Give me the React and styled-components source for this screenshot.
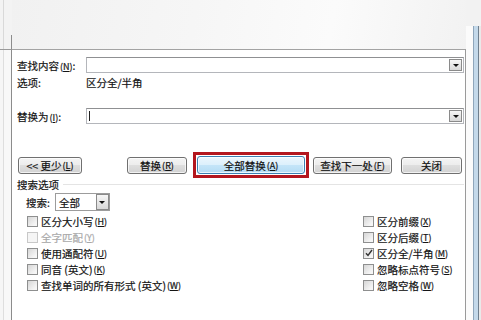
import React from 'react';
import styled, { createGlobalStyle } from 'styled-components';

const GlobalStyle = createGlobalStyle`
  html, body { margin: 0; padding: 0; background: #f3f3f3; }
  body { font-family: "Noto Sans CJK SC", "Liberation Sans", sans-serif; }
`;

const Frame = styled.div`
  width: 481px;
  height: 320px;
  overflow: hidden;
  display: grid;
  grid-template-columns: 12px 454px 15px;
  grid-template-rows: 49px 271px;
  background: #f2f2f2;
  color: #141414;
  font-size: 10.5px;
  -webkit-text-stroke: 0.2px currentColor;
`;

const TopLeft = styled.div`
  display: flex;
  flex-direction: column;
  justify-content: flex-end;
  background: linear-gradient(to right, #f3f3f3 3px, #d9d9d9 3px, #d9d9d9 4px, #f3f3f3 4px);
`;

const Stub = styled.div`
  height: 14px;
  border-right: 1px solid #8c8c8c;
`;

const Header = styled.div`
  background: linear-gradient(100deg, #f1f1f1 0%, #f6f6f6 40%, #fbfbfb 70%, #f2f2f2 100%);
`;

const RightFrame = styled.div`
  grid-row: 1 / span 2;
  grid-column: 3;
  display: flex;
  flex-direction: column;
`;

const FrameTop = styled.div`
  height: 26px;
  background: #f2f2f2;
`;

const FrameSide = styled.div`
  flex: 1;
  display: flex;
  background: #fbfbfb;
`;

const Stripe = styled.div`
  width: ${p => p.$w}px;
  background: ${p => p.$c};
`;

const Gutter = styled.div`
  border-top: 1px solid #9a9a9a;
  border-right: 1px solid #8c8c8c;
  background: linear-gradient(to right, #f6f6f6 3px, #dedede 3px, #dedede 4px, #f8f8f8 4px);
`;

const Panel = styled.div`
  border-top: 1px solid #a3a3a3;
  border-right: 1px solid #9a9a9a;
  background: #fff;
  padding: 7px 1px 0 5px;
  display: flex;
  flex-direction: column;
`;

const FieldRow = styled.div`
  display: grid;
  grid-template-columns: 69px 1fr;
  align-items: center;
  height: ${p => p.$h}px;
  margin-top: ${p => p.$mt || 0}px;
  white-space: nowrap;
`;

const Input = styled.div`
  height: 16px;
  box-sizing: border-box;
  border: 1px solid #b4b6bb;
  border-top-color: #8f9092;
  background: #fff;
  display: flex;
  align-items: center;
  justify-content: space-between;
  padding: 0 1px 0 2px;
`;

const Caret = styled.span`
  width: 1px;
  height: 10px;
  background: #222;
`;

const DropButton = styled.span`
  width: ${p => p.$w || 13}px;
  height: ${p => p.$h || 12}px;
  box-sizing: border-box;
  border: 1px solid #8a8a8a;
  background: linear-gradient(#f6f6f6, #d8d8d8);
  display: flex;
  align-items: center;
  justify-content: center;
  margin-left: auto;
`;

const Arrow = styled.span`
  width: 0;
  height: 0;
  border-left: 3px solid transparent;
  border-right: 3px solid transparent;
  border-top: 3px solid #111;
`;

const ButtonRow = styled.div`
  display: flex;
  align-items: center;
  height: 26px;
  margin-top: 28px;
`;

const Button = styled.div`
  width: ${p => p.$w}px;
  height: ${p => p.$h || 17}px;
  margin-left: ${p => p.$ml || 0}px;
  box-sizing: border-box;
  border: 1px solid ${p => (p.$primary ? '#3c7fb1' : '#707070')};
  border-radius: 3px;
  background: ${p =>
    p.$primary
      ? 'linear-gradient(#ecf6fd 0%, #dcf0fc 50%, #c5e5f8 50%, #b4dcf4 100%)'
      : 'linear-gradient(#f4f4f4 0%, #ececec 50%, #dedede 50%, #d2d2d2 100%)'};
  box-shadow: inset 0 0 0 1px rgba(255, 255, 255, 0.7);
  display: flex;
  align-items: center;
  justify-content: center;
  white-space: nowrap;
  color: #111;
`;

const Highlight = styled.div`
  margin-left: 6px;
  border: 3px solid #b3161e;
  padding: 1px;
  display: flex;
`;

const SectionHead = styled.div`
  display: flex;
  align-items: center;
  height: 12px;
`;

const Rule = styled.div`
  flex: 1;
  height: 1px;
  background: #e4e4e4;
  margin-left: 4px;
`;

const SearchRow = styled.div`
  display: flex;
  align-items: center;
  margin-top: 3px;
  padding-left: 9px;
  height: 18px;
`;

const Select = styled.div`
  margin-left: 5px;
  width: 55px;
  height: 18px;
  box-sizing: border-box;
  border: 1px solid #9c9c9c;
  display: flex;
  align-items: center;
  padding-left: 3px;
  background: #fff;
`;

const Options = styled.div`
  display: grid;
  grid-template-columns: 336px 1fr;
  margin-top: 2px;
  padding-left: 10px;
`;

const Column = styled.div`
  display: flex;
  flex-direction: column;
`;

const CheckItem = styled.div`
  display: flex;
  align-items: center;
  height: 16px;
  white-space: nowrap;
  color: ${p => (p.$disabled ? '#a9a9a9' : '#141414')};
`;

const Box = styled.span`
  width: 11px;
  height: 11px;
  box-sizing: border-box;
  margin-right: 3px;
  border: 1px solid ${p => (p.$disabled ? '#c8c8c8' : '#8e8f8f')};
  background: ${p =>
    p.$disabled ? '#f5f5f5' : 'linear-gradient(135deg, #d6d6d6, #f6f6f6 80%)'};
  display: flex;
  align-items: center;
  justify-content: center;
`;

const KeyText = styled.span`
  font-size: 9px;
  margin-left: 1px;
  & u { text-decoration: underline; }
`;

const Key = ({ k }) => (
  <KeyText>
    (<u>{k}</u>)
  </KeyText>
);

const Check = ({ label, k, checked, disabled }) => (
  <CheckItem $disabled={disabled}>
    <Box $disabled={disabled}>
      {checked && (
        <svg width="8" height="8" viewBox="0 0 8 8">
          <path d="M1 4.2 L3 6.5 L7 1" fill="none" stroke="#333" strokeWidth="1.4" />
        </svg>
      )}
    </Box>
    {label}
    <Key k={k} />
  </CheckItem>
);

const leftOptions = [
  { label: '区分大小写', k: 'H' },
  { label: '全字匹配', k: 'Y', disabled: true },
  { label: '使用通配符', k: 'U' },
  { label: '同音 (英文)', k: 'K' },
  { label: '查找单词的所有形式 (英文)', k: 'W' },
];

const rightOptions = [
  { label: '区分前缀', k: 'X' },
  { label: '区分后缀', k: 'T' },
  { label: '区分全/半角', k: 'M', checked: true },
  { label: '忽略标点符号', k: 'S' },
  { label: '忽略空格', k: 'W' },
];

export default function App() {
  return (
    <>
      <GlobalStyle />
      <Frame>
        <TopLeft>
          <Stub />
        </TopLeft>
        <Header />
        <RightFrame>
          <FrameTop />
          <FrameSide>
            <Stripe $w={7} $c="#fbfbfb" />
            <Stripe $w={1} $c="#8fa6bb" />
            <Stripe $w={4} $c="#c4d9ea" />
            <Stripe $w={1} $c="#6f7f8e" />
            <Stripe $w={2} $c="#e9e9e9" />
          </FrameSide>
        </RightFrame>
        <Gutter />
        <Panel>
          <FieldRow $h={16}>
            <span>查找内容<Key k="N" />:</span>
            <Input>
              <DropButton>
                <Arrow />
              </DropButton>
            </Input>
          </FieldRow>
          <FieldRow $h={14} $mt={2}>
            <span>选项:</span>
            <span>区分全/半角</span>
          </FieldRow>
          <FieldRow $h={16} $mt={19}>
            <span>替换为<Key k="I" />:</span>
            <Input>
              <Caret />
              <DropButton>
                <Arrow />
              </DropButton>
            </Input>
          </FieldRow>
          <ButtonRow>
            <Button $w={64} $ml={1}>&lt;&lt; 更少<Key k="L" /></Button>
            <Button $w={60} $ml={45}>替换<Key k="R" /></Button>
            <Highlight>
              <Button $w={108} $h={18} $primary>全部替换<Key k="A" /></Button>
            </Highlight>
            <Button $w={79} $ml={4}>查找下一处<Key k="F" /></Button>
            <Button $w={61} $ml={9}>关闭</Button>
          </ButtonRow>
          <SectionHead>
            <span>搜索选项</span>
            <Rule />
          </SectionHead>
          <SearchRow>
            <span>搜索:</span>
            <Select>
              全部
              <DropButton $w={13} $h={16}>
                <Arrow />
              </DropButton>
            </Select>
          </SearchRow>
          <Options>
            <Column>
              {leftOptions.map(o => (
                <Check key={o.label} {...o} />
              ))}
            </Column>
            <Column>
              {rightOptions.map(o => (
                <Check key={o.label} {...o} />
              ))}
            </Column>
          </Options>
        </Panel>
      </Frame>
    </>
  );
}
